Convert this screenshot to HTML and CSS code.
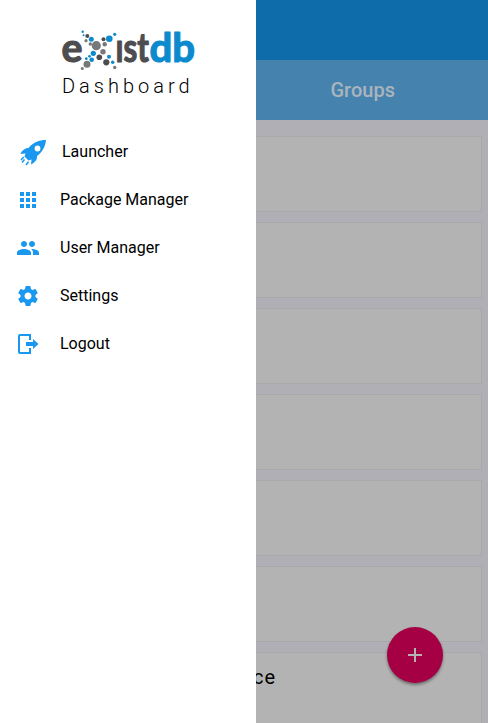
FILE: index.html
```html
<!DOCTYPE html>
<html lang="en">
<head>
<meta charset="utf-8">
<title>Dashboard</title>
<link rel="stylesheet" href="styles.css">
</head>
<body>
<aside class="drawer">
  <div class="brand">
    <svg class="logo" width="136" height="44" viewBox="60 28 136 44">
      <g class="wordmark">
        <text x="61.500" y="62" textLength="21" lengthAdjust="spacingAndGlyphs">e</text>
        <text x="115.500" y="62" textLength="33.500" lengthAdjust="spacingAndGlyphs">ıst</text>
        <text class="db" x="149.500" y="62" textLength="45.500" lengthAdjust="spacingAndGlyphs">db</text>
      </g>
      <g fill="#0b8ace">
        <circle cx="82.700" cy="31.700" r="1.200"/><circle cx="83.500" cy="35.300" r="1"/><circle cx="91.300" cy="39.300" r="2.500"/>
        <circle cx="109.300" cy="38.700" r="3.300"/><circle cx="114.700" cy="34.300" r="1.600"/>
        <circle cx="93.300" cy="53.300" r="2.600"/><circle cx="89.500" cy="56.300" r="1.400"/><circle cx="86.300" cy="58.700" r="1.400"/>
        <circle cx="91.700" cy="59.700" r="2.300"/><circle cx="109" cy="56.700" r="2"/><circle cx="112.700" cy="62.300" r="1.700"/>
      </g>
      <g fill="#77787b">
        <circle cx="96.300" cy="45.700" r="4.600"/><circle cx="86" cy="40.700" r="1.600"/><circle cx="90.300" cy="44" r="1.700"/>
        <circle cx="104.700" cy="44.300" r="2.200"/><circle cx="103" cy="51.700" r="2.700"/><circle cx="87" cy="64.300" r="3.500"/>
        <circle cx="82.300" cy="68.500" r="1.500"/><circle cx="114.700" cy="67.500" r="1.700"/>
      </g>
      <g fill="#4d4d4f">
        <circle cx="87.300" cy="36" r="2"/><circle cx="103.500" cy="39.300" r="2"/>
        <circle cx="99.300" cy="57.300" r="2.800"/><circle cx="106.300" cy="62.300" r="3.100"/>
      </g>
    </svg>
    <div class="title">Dashboard</div>
  </div>
  <nav class="menu">
    <a class="item launcher">
      <svg width="28" height="28" viewBox="0 0 28 28"><path fill-rule="evenodd" d="M27 2C20 2 14 4.500 9.500 10C6 10 3 12.500 1.500 16L6.500 15.500L5.500 18.500L9.500 22.500L12.500 21.500L12 26.500C16 24.500 18.500 21.500 18 18C23.500 14 26.500 8 27 2ZM18.500 7.600a2.900 2.900 0 1 1 0 5.800a2.900 2.900 0 1 1 0-5.800Z"/><path d="M4.800 19L2 22M9.500 23.800L7 27M5.500 21.500L3 24.500" stroke="currentColor" stroke-width="1.500"/></svg>
      <span>Launcher</span>
    </a>
    <a class="item">
      <svg width="24" height="24" viewBox="0 0 24 24"><path d="M4 8h4V4H4v4zm6 12h4v-4h-4v4zm-6 0h4v-4H4v4zm0-6h4v-4H4v4zm6 0h4v-4h-4v4zm6-10v4h4V4h-4zm-6 4h4V4h-4v4zm6 6h4v-4h-4v4zm0 6h4v-4h-4v4z"/></svg>
      <span>Package Manager</span>
    </a>
    <a class="item">
      <svg width="24" height="24" viewBox="0 0 24 24"><path d="M16 11c1.660 0 2.990-1.340 2.990-3S17.660 5 16 5c-1.660 0-3 1.340-3 3s1.340 3 3 3zm-8 0c1.660 0 2.990-1.340 2.990-3S9.660 5 8 5C6.340 5 5 6.340 5 8s1.340 3 3 3zm0 2c-2.330 0-7 1.170-7 3.500V19h14v-2.500c0-2.330-4.670-3.500-7-3.500zm8 0c-.29 0-.62.020-.97.050 1.160.840 1.970 1.970 1.970 3.450V19h6v-2.500c0-2.330-4.670-3.500-7-3.500z"/></svg>
      <span>User Manager</span>
    </a>
    <a class="item">
      <svg width="24" height="24" viewBox="0 0 24 24"><path d="M19.430 12.980c.040-.32.070-.64.070-.98s-.030-.66-.070-.98l2.110-1.650c.190-.15.240-.42.120-.64l-2-3.460c-.12-.22-.39-.3-.61-.22l-2.490 1c-.52-.4-1.080-.73-1.690-.98l-.38-2.650C14.460 2.180 14.250 2 14 2h-4c-.25 0-.46.180-.49.420l-.38 2.650c-.61.250-1.170.590-1.690.98l-2.490-1c-.23-.090-.49 0-.61.220l-2 3.460c-.13.220-.070.490.120.640l2.110 1.650c-.040.320-.070.650-.070.980s.030.660.070.980l-2.110 1.650c-.19.150-.24.420-.12.640l2 3.460c.12.220.39.300.61.220l2.490-1c.52.400 1.080.730 1.690.98l.38 2.650c.030.240.240.420.490.420h4c.250 0 .460-.18.490-.42l.38-2.650c.61-.25 1.170-.59 1.690-.98l2.490 1c.230.090.490 0 .61-.22l2-3.460c.12-.22.070-.49-.12-.64l-2.110-1.650zM12 15.500c-1.930 0-3.500-1.570-3.500-3.500s1.570-3.500 3.500-3.500 3.500 1.570 3.500 3.500-1.570 3.500-3.500 3.500z"/></svg>
      <span>Settings</span>
    </a>
    <a class="item">
      <svg width="24" height="24" viewBox="0 0 24 24"><path d="M14 8V3H4a1 1 0 0 0-1 1v16a1 1 0 0 0 1 1h10v-5" fill="none" stroke="currentColor" stroke-width="2"/><path d="M10 10h7V7l5.500 5-5.500 5v-3h-7z"/></svg>
      <span>Logout</span>
    </a>
  </nav>
</aside>
<main class="page">
  <header class="toolbar"></header>
  <div class="tab">Groups</div>
  <div class="cards">
    <div class="card"></div>
    <div class="card"></div>
    <div class="card"></div>
    <div class="card"></div>
    <div class="card"></div>
    <div class="card"></div>
    <div class="card">ce</div>
  </div>
  <button class="fab" aria-label="Add"><svg width="24" height="24" viewBox="0 0 24 24"><path d="M19 13h-6v6h-2v-6H5v-2h6V5h2v6h6v2z"/></svg></button>
</main>
</body>
</html>
```
FILE: styles.css
```css
* { box-sizing: border-box; }
body {
  margin: 0;
  height: 723px;
  display: grid;
  grid-template-columns: 256px 1fr;
  overflow: hidden;
  font-family: Roboto, sans-serif;
}
.drawer { background: #fff; height: 723px; }
.brand { height: 128px; padding: 28px 0 0 60px; }
.logo { display: block; overflow: visible; }
.wordmark {
  font: 700 40.5px Lato, sans-serif;
  fill: #4d4d4f;
  stroke: #4d4d4f;
  stroke-width: 1.2px;
  stroke-linejoin: round;
}
.wordmark .db { fill: #0b8ace; stroke: #0b8ace; }
.title {
  margin: 2px 0 0 2px;
  font-size: 20px;
  font-weight: 300;
  line-height: 24px;
  letter-spacing: 4px;
  color: #000;
}
.item {
  display: flex;
  align-items: center;
  gap: 20px;
  height: 48px;
  padding-left: 16px;
  font-size: 16px;
  color: #000;
}
.item span { padding-bottom: 2px; }
.item svg { flex: none; width: 24px; fill: #1a98f0; color: #1a98f0; }
.item.launcher { padding-left: 19px; gap: 15px; }
.item.launcher svg { width: 28px; }
.page {
  position: relative;
  height: 723px;
  overflow: hidden;
  background: #afafb5;
}
.toolbar { height: 60px; background: #0f6cab; }
.tab {
  height: 60px;
  padding-left: 74.5px;
  background: #4682ae;
  color: #a9b4bd;
  font-size: 20px;
  font-weight: 500;
  line-height: 60px;
}
.cards { display: grid; gap: 10px; padding: 16px 6px 0 0; }
.card {
  height: 76px;
  border: 1px solid #a8a8aa;
  border-left: 0;
  background: #b3b3b3;
  color: #000;
  font-size: 20px;
  line-height: 24px;
  letter-spacing: 1px;
  padding-top: 12px;
  text-indent: -3px;
}
.fab {
  position: absolute;
  left: 131px;
  top: 627px;
  width: 56px;
  height: 56px;
  display: grid;
  place-items: center;
  padding: 0;
  border: 0;
  border-radius: 50%;
  background: #a50044;
  box-shadow: 0 2px 3px rgba(0, 0, 0, .4);
}
.fab svg { fill: #b3b3b3; }
```
